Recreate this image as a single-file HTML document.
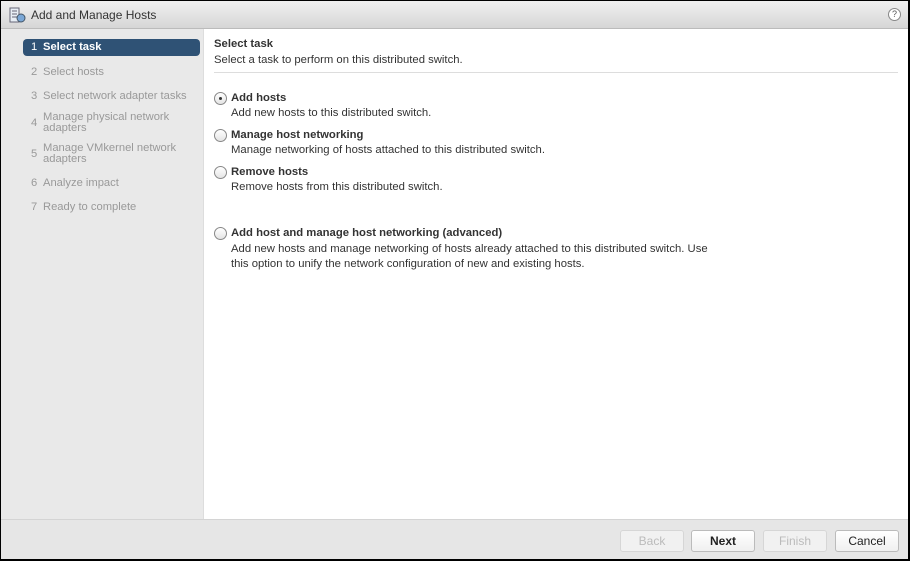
<!DOCTYPE html>
<html><head><style>
*{margin:0;padding:0;box-sizing:border-box}
body{width:910px;height:561px;background:#000;font-family:"Liberation Sans",Arial,sans-serif;position:relative;overflow:hidden}
#win{position:absolute;left:1px;top:1px;width:907px;height:558px;background:#fff;overflow:hidden}
#title{position:absolute;left:0;top:0;width:907px;height:28px;background:linear-gradient(#f0f0f0,#d6d6d6);border-bottom:1px solid #bbb}
#title span{position:absolute;left:30px;top:7px;font-size:12px;color:#333}
#side{position:absolute;left:0;top:28px;width:203px;height:490px;background:#e9e9e9;border-right:1px solid #ddd}
.st{position:absolute;left:22px;width:177px;font-size:11.2px;color:#999;padding-left:8px;line-height:11px}
.st b{font-weight:normal;display:inline-block;width:12px}
.act{background:#2f5275;color:#fff;font-weight:bold;height:17px;line-height:17px;border-radius:4px}
#main{position:absolute;left:204px;top:28px;width:703px;height:490px;background:#fff}
.h{position:absolute;font-size:11.3px;color:#333}
.r{position:absolute;left:9px;width:13px;height:13px;border:1px solid #888;border-radius:50%;background:linear-gradient(#fff,#e4e4e4)}
#foot{position:absolute;left:0;top:518px;width:907px;height:40px;background:#e6e6e6;border-top:1px solid #d4d4d4}
.btn{position:absolute;top:10px;height:22px;width:64px;border:1px solid #bbb;border-radius:3px;background:linear-gradient(#fff,#f0f0f0);font-size:12px;text-align:center;line-height:20px;color:#222}
.dis{color:#bbb;border-color:#d6d6d6;background:#f1f1f1}
</style></head><body>
<div id="win">
<div id="title">
<svg style="position:absolute;left:8px;top:6px" width="18" height="17" viewBox="0 0 18 17"><rect x="1" y="1" width="9" height="14" fill="#e8eef5" stroke="#667" stroke-width="1"/><line x1="3" y1="4" x2="8" y2="4" stroke="#667"/><line x1="3" y1="7" x2="8" y2="7" stroke="#667"/><line x1="3" y1="10" x2="8" y2="10" stroke="#667"/><circle cx="12" cy="11" r="4" fill="#7aa7d6" stroke="#456"/></svg>
<span>Add and Manage Hosts</span>
<div style="position:absolute;left:887px;top:7px;width:13px;height:13px;border:1px solid #888;border-radius:50%;font-size:9px;text-align:center;line-height:11px;color:#555;background:#fff">?</div>
</div>
<div id="side">
<div class="st act" style="top:10px"><b>1</b>Select task</div>
<div class="st" style="top:38px"><b>2</b>Select hosts</div>
<div class="st" style="top:62px"><b>3</b>Select network adapter tasks</div>
<div class="st" style="top:83px"><b style="vertical-align:top;margin-top:6px">4</b><span style="display:inline-block">Manage physical network<br>adapters</span></div>
<div class="st" style="top:114px"><b style="vertical-align:top;margin-top:6px">5</b><span style="display:inline-block">Manage VMkernel network<br>adapters</span></div>
<div class="st" style="top:149px"><b>6</b>Analyze impact</div>
<div class="st" style="top:173px"><b>7</b>Ready to complete</div>
</div>
<div id="main">
<div class="h" style="left:9px;top:9px;font-weight:bold">Select task</div>
<div class="h" style="left:9px;top:25px">Select a task to perform on this distributed switch.</div>
<div style="position:absolute;left:9px;top:43px;width:684px;height:1px;background:#ddd"></div>
<div class="r" style="top:63px"><div style="width:3px;height:3px;background:#333;border-radius:50%;margin:4px"></div></div>
<div class="h" style="left:26px;top:63px;font-weight:bold">Add hosts</div>
<div class="h" style="left:26px;top:78px">Add new hosts to this distributed switch.</div>
<div class="r" style="top:100px"></div>
<div class="h" style="left:26px;top:100px;font-weight:bold">Manage host networking</div>
<div class="h" style="left:26px;top:115px">Manage networking of hosts attached to this distributed switch.</div>
<div class="r" style="top:137px"></div>
<div class="h" style="left:26px;top:137px;font-weight:bold">Remove hosts</div>
<div class="h" style="left:26px;top:152px">Remove hosts from this distributed switch.</div>
<div class="r" style="top:198px"></div>
<div class="h" style="left:26px;top:198px;font-weight:bold">Add host and manage host networking (advanced)</div>
<div class="h" style="left:26px;top:213px;line-height:15px">Add new hosts and manage networking of hosts already attached to this distributed switch. Use<br>this option to unify the network configuration of new and existing hosts.</div>
</div>
<div id="foot">
<div class="btn dis" style="left:619px">Back</div>
<div class="btn" style="left:690px;font-weight:bold">Next</div>
<div class="btn dis" style="left:762px">Finish</div>
<div class="btn" style="left:834px">Cancel</div>
</div>
</div>
</body></html>
